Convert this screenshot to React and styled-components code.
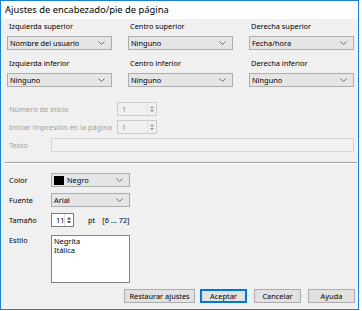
import React from "react";
import styled, { createGlobalStyle } from "styled-components";

const Global = createGlobalStyle`
  html, body { margin: 0; padding: 0; background: #ffffff; }
  body { font-family: "Noto Sans", "Open Sans", sans-serif; }
  * { box-sizing: border-box; }
`;

const Window = styled.div`
  width: 359px;
  height: 310px;
  border: 1px solid #1883d7;
  display: flex;
  flex-direction: column;
  background: #f0f0f0;
  font-size: 7.4px;
  color: #000;
`;

const TitleBar = styled.div`
  height: 18px;
  line-height: 17px;
  background: #ffffff;
  padding-left: 4px;
  font-size: 9.4px;
  color: #000;
`;

const Body = styled.div`
  flex: 1;
  display: flex;
  flex-direction: column;
  padding: 2px 3px 0 6px;
`;

const TopGrid = styled.div`
  display: grid;
  grid-template-columns: repeat(3, 105px);
  column-gap: 16px;
  row-gap: 8px;
`;

const Field = styled.div`
  display: flex;
  flex-direction: column;
  gap: 5px;
`;

const Label = styled.div`
  line-height: 10px;
  height: 10px;
  padding-left: ${(p) => p.$indent ?? 2}px;
  width: ${(p) => (p.$width ? `${p.$width}px` : "auto")};
  flex: none;
  white-space: nowrap;
  color: ${(p) => (p.$disabled ? "#a0a0a0" : "#000")};
`;

const ComboBox = styled.div`
  height: 14px;
  width: ${(p) => (p.$width ? `${p.$width}px` : "100%")};
  background: #e5e5e5;
  border: 1px solid #adadad;
  display: flex;
  align-items: center;
  padding: 0 6px 0 2px;
  gap: 3px;
`;

const ComboText = styled.span`
  flex: 1;
  line-height: 12px;
  white-space: nowrap;
`;

const Chevron = () => (
  <svg width="7" height="4" viewBox="0 0 7 4">
    <polyline points="0.5,0.5 3.5,3.5 6.5,0.5" fill="none" stroke="#606060" strokeWidth="0.9" />
  </svg>
);

const Swatch = styled.span`
  width: 10px;
  height: 9px;
  background: #000;
  flex: none;
`;

const Combo = ({ children, width, swatch }) => (
  <ComboBox $width={width}>
    {swatch && <Swatch />}
    <ComboText>{children}</ComboText>
    <Chevron />
  </ComboBox>
);

const Rows = styled.div`
  display: flex;
  flex-direction: column;
  gap: ${(p) => p.$gap}px;
  margin-top: ${(p) => p.$top}px;
`;

const Row = styled.div`
  display: flex;
  align-items: ${(p) => (p.$top ? "flex-start" : "center")};
  height: ${(p) => (p.$h ? `${p.$h}px` : "14px")};
  margin-top: ${(p) => p.$mt ?? 0}px;
`;

const SpinBox = styled.div`
  height: 14px;
  width: ${(p) => p.$width}px;
  border: 1px solid ${(p) => (p.$disabled ? "#cccccc" : "#7a7a7a")};
  background: ${(p) => (p.$disabled ? "#f0f0f0" : "#ffffff")};
  display: flex;
  align-items: stretch;
  color: ${(p) => (p.$disabled ? "#8d8d8d" : "#000")};
`;

const SpinValue = styled.span`
  flex: 1;
  padding-left: 4px;
  line-height: 12px;
`;

const SpinArrows = styled.span`
  width: 9px;
  display: flex;
  flex-direction: column;
  align-items: center;
  justify-content: center;
  gap: 1px;
  border-left: 1px solid ${(p) => (p.$disabled ? "#e3e3e3" : "#d9d9d9")};
`;

const Arrow = ({ up, color }) => (
  <svg width="4" height="2.5" viewBox="0 0 4 2.5">
    <polygon points={up ? "0,2.5 2,0 4,2.5" : "0,0 2,2.5 4,0"} fill={color} />
  </svg>
);

const Spin = ({ value, width, disabled }) => (
  <SpinBox $width={width} $disabled={disabled}>
    <SpinValue>{value}</SpinValue>
    <SpinArrows $disabled={disabled}>
      <Arrow up color={disabled ? "#9a9a9a" : "#404040"} />
      <Arrow color={disabled ? "#9a9a9a" : "#404040"} />
    </SpinArrows>
  </SpinBox>
);

const TextInput = styled.div`
  flex: 1;
  height: 14px;
  border: 1px solid #d4d4d4;
  background: #f0f0f0;
  margin-right: 1px;
`;

const Separator = styled.div`
  margin: 10px -2px 0;
  height: 2px;
  border-top: 1px solid #a0a0a0;
  border-bottom: 1px solid #ffffff;
`;

const Unit = styled.span`
  margin-left: ${(p) => p.$ml}px;
  line-height: 10px;
`;

const ListBox = styled.div`
  width: 79px;
  height: 48px;
  background: #ffffff;
  border: 1px solid #828282;
  padding: 1px 2px;
  line-height: 9px;
`;

const Footer = styled.div`
  display: flex;
  justify-content: flex-end;
  margin-top: 6px;
  gap: 7px;
`;

const Button = styled.div`
  height: 14px;
  width: ${(p) => p.$width}px;
  background: #e1e1e1;
  border: ${(p) => (p.$default ? "1px solid #0078d7" : "1px solid #adadad")};
  box-shadow: ${(p) => (p.$default ? "inset 0 0 0 1px #0078d7" : "none")};
  display: flex;
  align-items: center;
  justify-content: center;
  line-height: 10px;
  margin-right: ${(p) => p.$mr ?? 0}px;
`;

export default function App() {
  return (
    <>
      <Global />
      <Window>
        <TitleBar>Ajustes de encabezado/pie de página</TitleBar>
        <Body>
          <TopGrid>
            <Field>
              <Label>Izquierda superior</Label>
              <Combo>Nombre del usuario</Combo>
            </Field>
            <Field>
              <Label>Centro superior</Label>
              <Combo>Ninguno</Combo>
            </Field>
            <Field>
              <Label>Derecha superior</Label>
              <Combo>Fecha/hora</Combo>
            </Field>
            <Field>
              <Label>Izquierda inferior</Label>
              <Combo>Ninguno</Combo>
            </Field>
            <Field>
              <Label>Centro inferior</Label>
              <Combo>Ninguno</Combo>
            </Field>
            <Field>
              <Label>Derecha inferior</Label>
              <Combo>Ninguno</Combo>
            </Field>
          </TopGrid>

          <Rows $gap={4} $top={15}>
            <Row>
              <Label $disabled $width={110}>Número de inicio</Label>
              <Spin value="1" width={40} disabled />
            </Row>
            <Row>
              <Label $disabled $width={110}>Iniciar impresión en la página</Label>
              <Spin value="1" width={40} disabled />
            </Row>
            <Row>
              <Label $disabled $width={44}>Texto</Label>
              <TextInput />
            </Row>
          </Rows>

          <Separator />

          <Rows $gap={6} $top={9}>
            <Row>
              <Label $width={44}>Color</Label>
              <Combo width={79} swatch>Negro</Combo>
            </Row>
            <Row>
              <Label $width={44}>Fuente</Label>
              <Combo width={79}>Arial</Combo>
            </Row>
            <Row>
              <Label $width={44}>Tamaño</Label>
              <Spin value="11" width={23} />
              <Unit $ml={14}>pt</Unit>
              <Unit $ml={7}>[6 ... 72]</Unit>
            </Row>
            <Row $top $h={48} $mt={2}>
              <Label $width={44}>Estilo</Label>
              <ListBox>
                <div>Negrita</div>
                <div>Itálica</div>
              </ListBox>
            </Row>
          </Rows>

          <Footer>
            <Button $width={71} $mr={-2}>Restaurar ajustes</Button>
            <Button $width={47} $default>Aceptar</Button>
            <Button $width={47}>Cancelar</Button>
            <Button $width={47}>Ayuda</Button>
          </Footer>
        </Body>
      </Window>
    </>
  );
}
